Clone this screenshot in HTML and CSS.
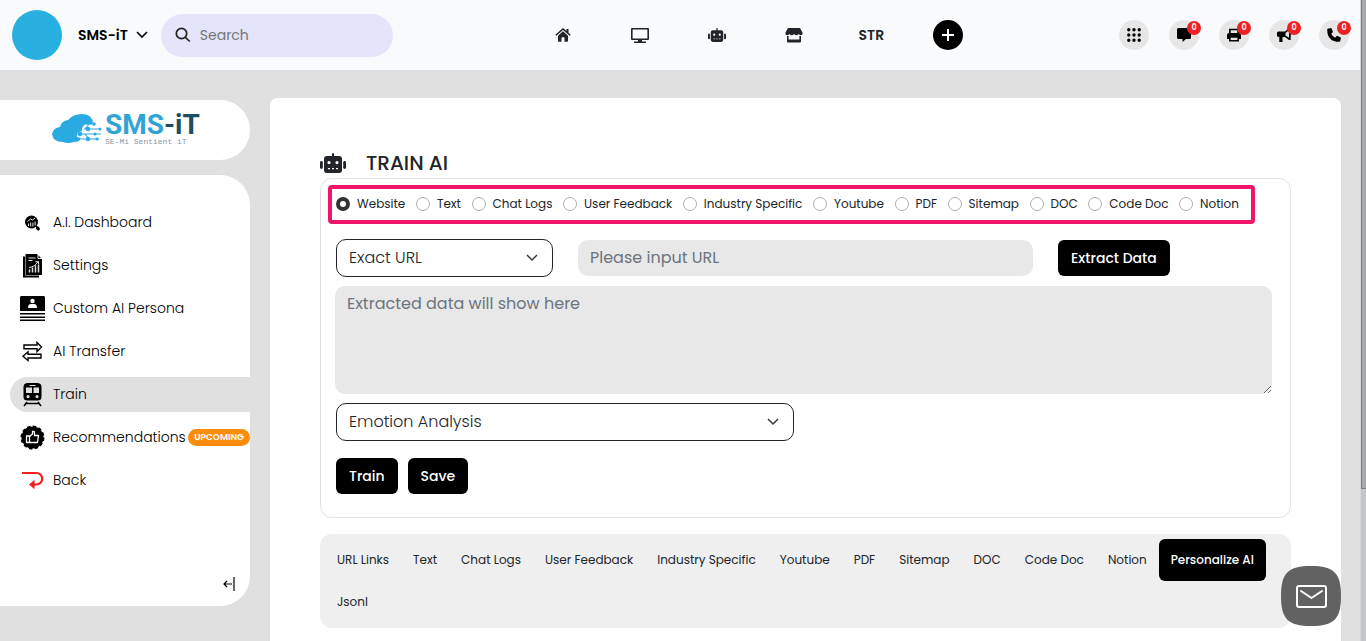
FILE: index.html
```html
<!DOCTYPE html>
<html lang="en">
<head>
<meta charset="utf-8">
<meta name="viewport" content="width=device-width, initial-scale=1">
<title>SMS-iT - Train AI</title>
<link rel="stylesheet" href="styles.css">
</head>
<body>
<svg class="defs" aria-hidden="true">
  <symbol id="robot" viewBox="0 0 26 20">
    <rect x="12" y="0" width="2" height="5" rx="1"/><rect x="0" y="8" width="2.800" height="8" rx="1.400"/><rect x="23.200" y="8" width="2.800" height="8" rx="1.400"/>
    <path fill-rule="evenodd" d="M7 3h12a3 3 0 0 1 3 3v11a3 3 0 0 1-3 3H7a3 3 0 0 1-3-3V6a3 3 0 0 1 3-3Zm2 5a1.600 1.600 0 1 0 0 3.200A1.600 1.600 0 0 0 9 8Zm8 0a1.600 1.600 0 1 0 0 3.200A1.600 1.600 0 0 0 17 8ZM8 15v1.300h2V15Zm4 0v1.300h2V15Zm4 0v1.300h2V15Z"/>
  </symbol>
</svg>
<div class="page">
  <div class="app">
    <header class="topbar">
      <div class="brand">
        <span class="avatar"></span>
        <button class="account" type="button">SMS-iT
          <svg width="12" height="8" viewBox="0 0 12 8" fill="none" stroke="currentColor" stroke-width="1.600"><path d="m1 1 5 5 5-5"/></svg>
        </button>
        <label class="search">
          <svg width="16" height="16" viewBox="0 0 16 16" fill="none" stroke="#222" stroke-width="1.700"><circle cx="6.500" cy="6.500" r="5.200"/><path d="m10.300 10.300 4.500 4.200"/></svg>
          <input type="search" placeholder="Search" aria-label="Search">
        </label>
      </div>
      <nav class="mainnav" aria-label="Main">
        <a href="#" aria-label="Home"><svg width="16" height="14" viewBox="0 0 16 14"><path d="M8 0 .3 6.700l1 1.100L8 2l6.700 5.800 1-1.100L13.500 4.700V1H11.500v2Z"/><path d="M8 3.300 3 7.700V13q0 .7.7.7H6.500V10q0-.7.7-.7h1.600q.7 0 .7.7v3.700h2.800q.7 0 .7-.7V7.700Z"/></svg></a>
        <a href="#" aria-label="Display"><svg width="18" height="15" viewBox="0 0 18 15"><path fill-rule="evenodd" d="M1 0h16q1 0 1 1v10q0 1-1 1h-6v1.500h4V15H3v-1.500h4V12H1q-1 0-1-1V1q0-1 1-1Zm.6 1.600v8.800h14.800V1.600Z"/></svg></a>
        <a href="#" aria-label="Assistant"><svg width="18" height="14"><use href="#robot"/></svg></a>
        <a href="#" aria-label="Store"><svg width="18" height="15" viewBox="0 0 18 15"><path d="M3 0h12l2.500 4.500Q18 7 15.700 7.200 14.200 7 13.500 6q-1 1.200-2.200 1.200T9 6Q8 7.200 6.700 7.200T4.500 6Q3.800 7 2.300 7.200 0 7 .5 4.500Z"/><path fill-rule="evenodd" d="M2 8h1.600v3.500h10.800V8H16v5.500q0 1-1 1H3q-1 0-1-1Z"/></svg></a>
        <a href="#">STR</a>
        <a class="add" href="#" aria-label="Add"><svg width="12" height="12" viewBox="0 0 12 12" stroke="currentColor" stroke-width="2"><path d="M6 0v12M0 6h12"/></svg></a>
      </nav>
      <div class="actions">
        <button type="button" aria-label="Apps"><svg width="14" height="14" viewBox="0 0 14 14"><path fill="none" stroke="#000" stroke-width="3.400" stroke-linecap="round" d="M1.800 1.800h0M7 1.800h0M12.200 1.800h0M1.800 7h0M7 7h0M12.200 7h0M1.800 12.200h0M7 12.200h0M12.200 12.200h0"/></svg></button>
        <button type="button" aria-label="Messages"><svg width="14" height="14" viewBox="0 0 14 14"><path d="M1.500 0h11Q14 0 14 1.500v8q0 1.500-1.500 1.500H9l-3.500 3V11h-4Q0 11 0 9.500v-8Q0 0 1.500 0Z"/></svg><span class="badge">0</span></button>
        <button type="button" aria-label="Fax"><svg width="14" height="14" viewBox="0 0 14 14"><path d="M2 5V.7h10V5h-1.700V2.300H3.700V5Z"/><path fill-rule="evenodd" d="M2 5h10q2 0 2 2v4h-2v2.500H2V11H0V7q0-2 2-2Zm1.600 4.700V12h6.800V9.700Z"/></svg><span class="badge">0</span></button>
        <button type="button" aria-label="Campaigns"><svg width="14" height="14" viewBox="0 0 14 14"><path fill-rule="evenodd" d="M12 0h1.700v4.500q1 1 0 2.500v5H12L8 9H5.500v5H2.300V9Q0 9 0 7.500V5q0-1.500 1.500-1.500H8Zm0 2.200L8.500 5v2.500L12 9.800Z"/></svg><span class="badge">0</span></button>
        <button type="button" aria-label="Calls"><svg width="14" height="14" viewBox="0 0 14 14"><path d="M.9.8 3.700.1q.6-.1.9.5l1.200 3q.2.600-.2 1L4.200 5.800q1.300 2.700 4 4l1.200-1.500q.4-.4 1-.2l3 1.200q.6.300.5.9l-.7 2.900q-.2.700-.9.700Q.3 13.800.2 1.700.2 1 .9.800Z"/></svg><span class="badge">0</span></button>
      </div>
    </header>
    <div class="body">
      <aside class="side">
        <a class="logo" href="#">
          <svg width="51" height="30" viewBox="0 0 51 30" fill="#29abe2"><path d="M8 13Q9 7 16 6 21 0 30 0q9 0 11 8l-1 2H33l-3 4v3l-5 2v4l4 1q-1 4-7 4-6 2-11 0Q1 28 0 20q1-6 8-7Z"/><g fill="none" stroke="#29abe2" stroke-width="1.200"><path d="M32 10h10M32 15h17M25 20h24M29 25h18M33 15l4-5M33 20l4 5"/></g><circle cx="42" cy="10" r="1.800"/><circle cx="36" cy="15" r="2.200"/><circle cx="48" cy="15" r="1.500"/><circle cx="28" cy="20" r="2.200"/><circle cx="43" cy="20" r="1.500"/><circle cx="36" cy="25" r="2.200"/><circle cx="45" cy="25" r="1.600"/></svg>
          <span class="wordmark"><span class="name">SMS<span class="name-end">-iT</span></span><span class="tagline">SE-Mi Sentient iT</span></span>
        </a>
        <nav class="menu" aria-label="Sidebar">
          <a href="#"><svg width="25" height="25" viewBox="0 0 25 25"><circle cx="11.500" cy="12" r="6.500"/><path d="m16 16 2 2" stroke="#000" stroke-width="1.300"/><path d="m17.500 18 .8.800" stroke="#000" stroke-width="3.200" stroke-linecap="round"/><path d="M8.500 16v-2.500m2.200 3v-4m2.200 4v-4m2.200 3v-4M7.500 11.500l3-2.500 2 1 2.500-2" fill="none" stroke="#fff" stroke-width=".9"/></svg>A.I. Dashboard</a>
          <a href="#"><svg width="25" height="25" viewBox="0 0 25 25"><path d="M5.500 1H17l5 5v16H5.500Z"/><path d="M4 3.500v20h15" fill="none" stroke="#000" stroke-width="2"/><path d="M18 .8v4.700h4.500M8.500 5h7M8.500 7.500h4M9 14.500q6-.500 9-6M15.500 8.700H18.500v2.500" fill="none" stroke="#fff" stroke-width=".9"/><path d="M9.500 19.500v-3m3 3v-5m3 5v-7m3 7v-8" stroke="#ddd" stroke-width="1.500"/></svg>Settings</a>
          <a href="#"><svg width="25" height="25" viewBox="0 0 25 25"><path d="M1 0h23l1 1v14H0V1Zm-1 17h25v1.500H0Zm0 3.500h25V22H0Zm0 3h25V25H0Z"/><circle cx="12.500" cy="5" r="2.200" fill="#fff"/><path fill="#fff" d="M8 12q0-4 3-4h3q3 0 3 4Z"/></svg>Custom AI Persona</a>
          <a href="#"><svg width="25" height="25" viewBox="0 0 25 25" fill="none" stroke="#000" stroke-width="1.400"><path d="M4 6h13V3.500l4.500 4.500-4.500 4.500V9.700H4ZM21 15.300H8v-2.500L3 17.300 8 21.500V19h13Z"/></svg>AI Transfer</a>
          <a class="current" href="#" aria-current="page"><svg width="25" height="25" viewBox="0 0 25 25"><path fill-rule="evenodd" d="M8 1h9q4.500 0 4.500 4v10q0 3.500-4 3.500h-10q-4 0-4-3.500V5Q3.500 1 8 1ZM6 5.500V11h6V5.500Zm7.500 0V11h5.500V5.500ZM8 13a1.600 1.600 0 1 0 0 3.200A1.600 1.600 0 0 0 8 13Zm9 0a1.600 1.600 0 1 0 0 3.200A1.600 1.600 0 0 0 17 13ZM9.500 3v1h6V3Z"/><path d="m7 20-3 4M18 20l3 4M6 21.500h13" stroke="#000" stroke-width="1.500"/></svg>Train</a>
          <a href="#"><svg width="25" height="25" viewBox="0 0 25 25"><circle cx="12.500" cy="12.500" r="11"/><circle cx="12.500" cy="12.500" r="11" fill="none" stroke="#000" stroke-width="2" stroke-dasharray="3.400 2.360"/><path fill="none" stroke="#fff" stroke-width="1.300" stroke-linejoin="round" d="M6.500 11h3v6.500h-3ZM9.500 11.500l3-2.500V6.500q2-.5 2 1.500v2.500h4l-1 7h-8"/></svg>Recommendations<span class="tag">UPCOMING</span></a>
          <a href="#"><svg width="25" height="25" viewBox="0 0 25 25" fill="none" stroke="#ed2024" stroke-width="2.200"><path d="M2 5h14.500a5.700 5.700 0 0 1 0 11.500H13"/><path fill="#ed2024" stroke="none" d="m9 16.500 5.500-4.800v3l1 1.800-1 1.800v3Z"/></svg>Back</a>
          <button class="collapse" type="button" aria-label="Collapse sidebar"><svg width="12" height="14" viewBox="0 0 12 14" fill="none" stroke="#000" stroke-width="1.200"><path d="M9 7H1m3-3L1 7l3 3M11 0v14"/></svg></button>
        </nav>
      </aside>
      <main class="card">
        <h1><svg width="26" height="20"><use href="#robot"/></svg>TRAIN AI</h1>
        <form class="panel">
          <div class="sources" role="radiogroup" aria-label="Training source">
            <label><input type="radio" name="source" checked>Website</label>
            <label><input type="radio" name="source">Text</label>
            <label><input type="radio" name="source">Chat Logs</label>
            <label><input type="radio" name="source">User Feedback</label>
            <label><input type="radio" name="source">Industry Specific</label>
            <label><input type="radio" name="source">Youtube</label>
            <label><input type="radio" name="source">PDF</label>
            <label><input type="radio" name="source">Sitemap</label>
            <label><input type="radio" name="source">DOC</label>
            <label><input type="radio" name="source">Code Doc</label>
            <label><input type="radio" name="source">Notion</label>
          </div>
          <div class="fields">
            <div class="select"><select aria-label="URL type"><option>Exact URL</option></select><svg width="12" height="8" viewBox="0 0 12 8"><path d="m1 1 5 5 5-5"/></svg></div>
            <input class="field" type="text" placeholder="Please input URL" aria-label="URL">
            <button class="btn" type="button">Extract Data</button>
          </div>
          <textarea class="field data" placeholder="Extracted data will show here" aria-label="Extracted data"></textarea>
          <div class="select analysis"><select aria-label="Analysis type"><option>Emotion Analysis</option></select><svg width="12" height="8" viewBox="0 0 12 8"><path d="m1 1 5 5 5-5"/></svg></div>
          <div class="buttons"><button class="btn" type="button">Train</button><button class="btn" type="button">Save</button></div>
        </form>
        <nav class="tabs" aria-label="Training data">
          <a href="#">URL Links</a><a href="#">Text</a><a href="#">Chat Logs</a><a href="#">User Feedback</a><a href="#">Industry Specific</a><a href="#">Youtube</a><a href="#">PDF</a><a href="#">Sitemap</a><a href="#">DOC</a><a href="#">Code Doc</a><a href="#">Notion</a><a class="active" href="#">Personalize AI</a><a href="#">Jsonl</a>
        </nav>
      </main>
    </div>
  </div>
  <div class="scrollbar" aria-hidden="true"><div class="thumb"></div></div>
</div>
<button class="mail" type="button" aria-label="Contact us"><svg width="60" height="60" viewBox="0 0 60 60"><path fill="#626262" d="M30 0C53 0 60 7 60 30S53 60 30 60 0 53 0 30 7 0 30 0Z"/><g fill="none" stroke="#fff" stroke-width="2" stroke-linejoin="round" stroke-linecap="round"><rect x="16" y="20" width="29" height="21" rx="2"/><path d="m20 25 10.500 7L41 25"/></g></svg></button>
</body>
</html>
```
FILE: styles.css
```css
* { box-sizing: border-box; }
body { margin: 0; font-family: Poppins, Inter, "Noto Sans", sans-serif; font-size: 14px; color: #212529; background: #e0e0e0; }
a { color: inherit; text-decoration: none; }
button, input, select, textarea { font: inherit; color: inherit; }
button { border: 0; padding: 0; background: none; cursor: pointer; }
svg { display: block; flex: none; }
.defs { position: absolute; width: 0; height: 0; }

.page { display: grid; grid-template-columns: minmax(0, 1fr) 6px; min-height: 100vh; }
.app { display: flex; flex-direction: column; }
.scrollbar { background: #c3c5c7; border-left: 1px solid #d2d4d6; }
.thumb { height: 489px; background: #a5a9ac; border: solid #7b7f82; border-width: 0 0 1px 1px; }

.topbar { display: flex; align-items: center; justify-content: space-between; min-height: 70px; padding: 0 11px 0 12px; background: #f8fafc; }
.brand { display: flex; align-items: center; }
.avatar { width: 50px; height: 50px; border-radius: 50%; background: #27b0e0; }
.account { display: flex; align-items: center; gap: 8px; margin: 0 13px 0 16px; font-weight: 600; color: #000; }
.search { display: flex; align-items: center; gap: 8px; width: 232px; height: 43px; padding: 0 14px; border-radius: 22px; background: #e4e4fa; }
.search input { width: 100%; min-width: 0; padding: 0 0 0 1px; border: 0; outline: 0; background: none; font-size: 14px; }
.search input::placeholder { color: #757575; opacity: 1; }
.mainnav { display: grid; grid-template-columns: repeat(6, 77px); align-items: center; justify-items: center; font-weight: 600; fill: #212529; }
.add { display: grid; place-items: center; width: 30px; height: 30px; border-radius: 50%; background: #000; color: #fff; }
.actions { display: flex; gap: 20px; }
.actions button { position: relative; display: grid; place-items: center; width: 30px; height: 30px; border-radius: 50%; background: #e6e6e6; }
.badge { position: absolute; top: 1px; right: -2px; width: 14px; height: 14px; border-radius: 50%; background: #ed2024; color: #fff; font-size: 8px; line-height: 14px; font-weight: 600; }

.body { display: flex; flex: 1; gap: 20px; padding-right: 19px; }
.side { flex: none; width: 250px; padding-top: 30px; }
.logo { display: flex; align-items: center; gap: 2px; height: 60px; padding: 0 0 2px 52px; margin-bottom: 15px; border-radius: 0 30px 30px 0; background: #fff; }
.wordmark { display: flex; flex-direction: column; }
.name { font-family: Roboto, sans-serif; font-size: 28px; line-height: 26px; font-weight: 700; color: #2fa4d6; }
.name-end { color: #1e4e63; }
.tagline { font-family: "Liberation Mono", monospace; font-size: 8px; line-height: 8px; color: #8b97a0; }
.menu { display: flex; flex-direction: column; gap: 8px; min-height: 431px; padding: 30px 0 15px 10px; border-radius: 0 30px 30px 0; background: #fff; }
.menu a { display: flex; align-items: center; height: 35px; padding-left: 10px; border-radius: 18px 0 0 18px; color: #000; font-weight: 300; white-space: nowrap; }
.menu a svg { margin-right: 8px; }
.menu .current { background: #e0e0e0; }
.tag { margin-left: auto; padding: 0 6px; border-radius: 9px; background: #fb8c0c; color: #fff; font-size: 9px; line-height: 17px; font-weight: 600; }
.collapse { align-self: flex-end; margin: auto 15px 0 0; }

.card { flex: 1; min-width: 0; margin-top: 28px; padding: 50px 50px 13px; border-radius: 8px 8px 0 0; background: #fff; }
h1 { display: flex; align-items: center; gap: 20px; margin: 0; font-size: 20px; line-height: 30px; font-weight: 500; }
h1 svg, .mainnav svg { fill: #212529; }
.panel { padding: 6px 15px 23px; border: 1px solid #dee2e6; border-radius: 12px; background: #fff; }
.sources { display: flex; justify-content: space-between; align-items: center; min-height: 39px; margin: 0 20px 15px -8px; padding: 0 12px 2px 4px; border: 4px solid #f0146a; border-radius: 4px; font-size: 12px; }
.sources label { display: flex; align-items: center; gap: 7px; white-space: nowrap; }
.sources input { appearance: none; width: 14px; height: 14px; margin: 0; border: 1px solid #adadad; border-radius: 50%; background: #fff; }
.sources input:checked { border: 4px solid #333; }
.fields { display: grid; grid-template-columns: 217fr 455fr 217fr; gap: 25px; align-items: center; }
.select { display: grid; align-items: center; font-size: 16px; font-weight: 300; }
.select select { grid-area: 1 / 1; appearance: none; width: 100%; height: 38px; padding: 0 12px 2px; border: 1px solid #212529; border-radius: 10px; background: #fff; }
.select svg { grid-area: 1 / 1; justify-self: end; margin-right: 15px; fill: none; stroke: #343a40; stroke-width: 1.5; pointer-events: none; }
.field { width: 100%; height: 36px; padding: 0 12px 2px; border: 0; border-radius: 10px; background: #e8e8e8; font-size: 16px; }
.field::placeholder { color: #6c757d; opacity: 1; }
.data { display: block; width: auto; min-width: calc(100% - 2px); height: 108px; margin: 9px 3px 9px -1px; padding: 5px 12px; }
.analysis { width: 49%; padding-right: 2px; }
.btn { justify-self: start; height: 36px; padding: 0 13px; border-radius: 6px; background: #000; color: #fff; font-weight: 500; }
.buttons { display: flex; gap: 10px; margin-top: 17px; }
.tabs { display: flex; flex-wrap: wrap; margin-top: 16px; padding: 5px; border-radius: 12px; background: #efefef; font-size: 12px; line-height: 18px; }
.tabs a { padding: 12px; border-radius: 6px; }
.tabs .active { background: #000; color: #fff; font-weight: 500; }
.mail { position: fixed; right: 25px; bottom: 15px; }
```
